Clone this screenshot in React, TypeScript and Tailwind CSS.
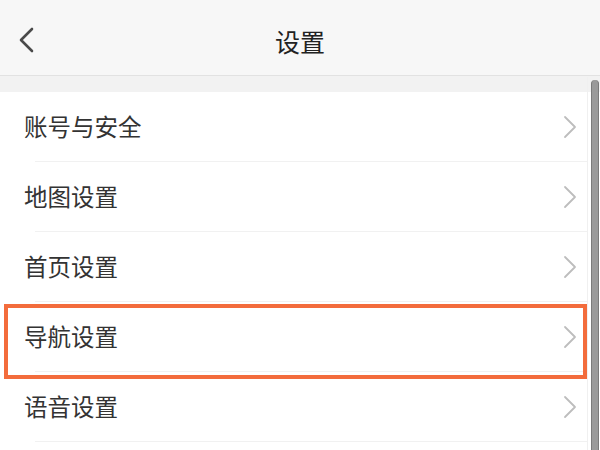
import React from "react";

const items = ["账号与安全", "地图设置", "首页设置", "导航设置", "语音设置"];

function Chevron() {
  return (
    <svg width="14" height="24" viewBox="0 0 14 24" fill="none">
      <path d="M2 2 L12 12 L2 22" stroke="#bdbdbd" strokeWidth="1.8" strokeLinecap="round" strokeLinejoin="round" />
    </svg>
  );
}

export default function App() {
  return (
    <div
      className="relative w-[600px] h-[450px] overflow-hidden bg-white"
      style={{ fontFamily: '"Noto Sans CJK SC", "Noto Sans", sans-serif' }}
    >
      <div className="relative h-[76px] bg-[#f7f7f7] border-b border-[#e2e2e2] flex items-center justify-center">
        <div className="absolute left-[19px] top-[27px]">
          <svg width="16" height="26" viewBox="0 0 16 26" fill="none">
            <path d="M13 2 L2 13 L13 24" stroke="#4a4a4a" strokeWidth="2.6" strokeLinecap="round" strokeLinejoin="round" />
          </svg>
        </div>
        <span className="text-[25px] leading-none text-[#222] mt-[8px]">设置</span>
      </div>
      <div className="h-[16px] bg-[#f2f2f2]" />
      <div className="flex flex-col">
        {items.map((t, i) => (
          <div key={t} className="relative flex flex-col">
            <div className="h-[69px] flex items-center justify-between pl-[24px] pr-[23px]">
              <span className="text-[23.5px] leading-none text-[#333]">{t}</span>
              <Chevron />
            </div>
            <div className="h-px ml-[35px] mr-[13px] bg-[#f1f1f1]" />
            {i === 3 && (
              <div className="absolute left-[4px] right-[13px] top-[2px] -bottom-[7px] border-[4px] border-[#f36c3c]" />
            )}
          </div>
        ))}
      </div>
      <div className="absolute left-[587px] top-[77px] bottom-0 w-px bg-[#f0f0f0]" />
      <div className="absolute left-[591px] top-[80px] bottom-0 w-[8px] rounded-t-full bg-[#9a9a9a] border-x border-[#7a7a7a]" />
    </div>
  );
}
